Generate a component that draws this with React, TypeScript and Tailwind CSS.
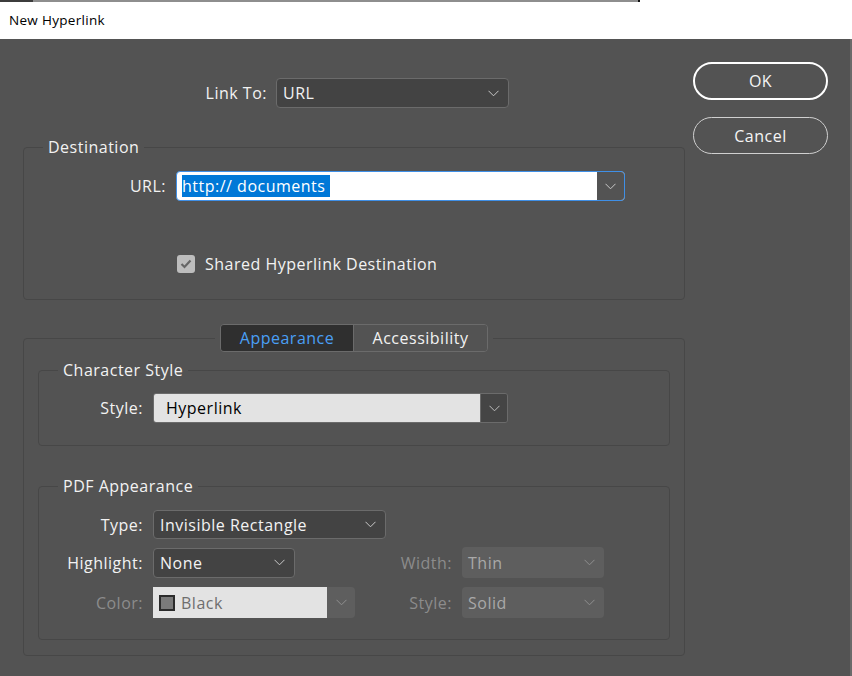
import React from 'react';

const FONT = { fontFamily: '"Open Sans", "Noto Sans", sans-serif', letterSpacing: '0.5px' };

function Chevron({ color = '#c9c9c9' }: { color?: string }) {
  return (
    <svg width="11" height="7" viewBox="0 0 11 7" fill="none">
      <path d="M0.5 0.8 L5.5 5.8 L10.5 0.8" stroke={color} strokeWidth="1" />
    </svg>
  );
}

// dark dropdown used for Link To / Type / Highlight
function DarkSelect({ value, width, height = 30 }: { value: string; width: number; height?: number }) {
  return (
    <div
      className="flex items-center justify-between rounded-[4px] border border-[#6b6b6b] bg-[#434343] pl-[6px] pr-[9px] text-[16px] text-[#f2f2f2]"
      style={{ width, height }}
    >
      <span>{value}</span>
      <Chevron />
    </div>
  );
}

function DisabledSelect({ value, width }: { value: string; width: number }) {
  return (
    <div
      className="flex h-[31px] items-center justify-between rounded-[4px] bg-[#5e5e5e] pl-[6px] pr-[9px] text-[16px] text-[#a9a9a9]"
      style={{ width }}
    >
      <span>{value}</span>
      <Chevron color="#8f8f8f" />
    </div>
  );
}

export default function App() {
  return (
    <div className="relative flex h-[676px] w-[852px] flex-col overflow-hidden bg-[#535353]" style={FONT}>
      {/* Top strip */}
      <div className="flex h-[2px] bg-white">
        <div className="w-[33px] bg-[#3c3c3c]" />
        <div className="w-[605px] bg-[#8e8e8e]" />
        <div className="w-[2px] bg-[#111]" />
      </div>

      {/* Title bar */}
      <div className="flex h-[37px] items-center bg-white pl-[9px] text-[13.5px] tracking-[0.3px] text-black">New Hyperlink</div>

      <div className="flex flex-1">
        {/* Left column */}
        <div className="ml-[23px] flex w-[662px] flex-col">
          {/* Link To */}
          <div className="mt-[39px] flex items-center gap-[9px]">
            <div className="w-[244px] text-right text-[16px] text-[#f2f2f2]">Link To:</div>
            <DarkSelect value="URL" width={233} />
          </div>

          {/* Destination */}
          <fieldset className="mt-[29px] rounded-[4px] border border-[#474747] pb-[25px]">
            <legend className="ml-[19px] px-[5px] text-[16px] leading-[20px] text-[#f2f2f2]">Destination</legend>
            <div className="mt-[14px] flex items-center gap-[10px]">
              <div className="w-[142px] text-right text-[16px] text-[#f2f2f2]">URL:</div>
              <div className="flex h-[30px] w-[449px] overflow-hidden rounded-[4px] border border-[#3f8fe6] bg-white">
                <div className="flex flex-1 items-center pl-[5px]">
                  <span className="bg-[#0078d7] pr-[5px] text-[16px] leading-[22px] text-white">http:// documents</span>
                </div>
                <div className="flex w-[27px] items-center justify-center bg-[#535353]">
                  <Chevron />
                </div>
              </div>
            </div>
            <div className="mt-[53px] flex items-center">
              <div className="ml-[153px] flex h-[18px] w-[18px] items-center justify-center rounded-[3px] bg-[#bdbdbd]">
                <svg width="12" height="10" viewBox="0 0 12 10" fill="none">
                  <path d="M1.5 5 L4.5 8 L10.5 1.5" stroke="#666" strokeWidth="2.2" />
                </svg>
              </div>
              <span className="ml-[10px] text-[16px] leading-[20px] text-[#f2f2f2]">Shared Hyperlink Destination</span>
            </div>
          </fieldset>

          {/* Tab panel */}
          <fieldset className="mt-[24px] rounded-[4px] border border-[#474747] px-[14px] pb-[15px]">
            <legend className="ml-[177px] px-[5px]">
              <div className="flex h-[28px] overflow-hidden rounded-[4px] border border-[#6b6b6b] text-[16px]">
                <div className="flex w-[132px] items-center justify-center bg-[#2f2f2f] text-[#4a9ff5]">Appearance</div>
                <div className="flex w-[134px] items-center justify-center border-l border-[#6b6b6b] bg-[#535353] text-[#f2f2f2]">
                  Accessibility
                </div>
              </div>
            </legend>

            {/* Character Style */}
            <fieldset className="mt-[8px] rounded-[4px] border border-[#474747] pb-[22px]">
              <legend className="ml-[19px] px-[5px] text-[16px] leading-[20px] text-[#f2f2f2]">Character Style</legend>
              <div className="mt-[13px] flex items-center gap-[10px]">
                <div className="w-[104px] text-right text-[16px] text-[#f2f2f2]">Style:</div>
                <div className="flex h-[30px] w-[355px] overflow-hidden rounded-[3px] border border-[#6b6b6b]">
                  <div className="flex flex-1 items-center bg-[#e3e3e3] pl-[12px] text-[16px] text-black">Hyperlink</div>
                  <div className="flex w-[27px] items-center justify-center border-l border-[#6b6b6b] bg-[#454545]">
                    <Chevron color="#bdbdbd" />
                  </div>
                </div>
              </div>
            </fieldset>

            {/* PDF Appearance */}
            <fieldset className="mt-[30px] rounded-[4px] border border-[#474747] pb-[21px]">
              <legend className="ml-[19px] px-[5px] text-[16px] leading-[20px] text-[#f2f2f2]">PDF Appearance</legend>

              <div className="mt-[14px] flex items-center gap-[10px]">
                <div className="w-[104px] text-right text-[16px] text-[#f2f2f2]">Type:</div>
                <DarkSelect value="Invisible Rectangle" width={233} height={29} />
              </div>

              <div className="mt-[8px] flex items-center">
                <div className="w-[104px] text-right text-[16px] text-[#f2f2f2]">Highlight:</div>
                <div className="ml-[10px]">
                  <DarkSelect value="None" width={142} />
                </div>
                <div className="w-[157px] text-right text-[16px] text-[#8c8c8c]">Width:</div>
                <div className="ml-[10px]">
                  <DisabledSelect value="Thin" width={142} />
                </div>
              </div>

              <div className="mt-[9px] flex items-center">
                <div className="w-[104px] text-right text-[16px] text-[#8c8c8c]">Color:</div>
                <div className="ml-[10px] flex h-[31px] w-[202px]">
                  <div className="flex w-[174px] items-center bg-[#e3e3e3] pl-[6px] text-[16px] text-[#6e6e6e]">
                    <span className="mr-[6px] h-[16px] w-[16px] border-2 border-[#2b2b2b] bg-[#7a7a7a]" />
                    Black
                  </div>
                  <div className="flex w-[28px] items-center justify-center rounded-r-[4px] bg-[#5e5e5e]">
                    <Chevron color="#8f8f8f" />
                  </div>
                </div>
                <div className="w-[97px] text-right text-[16px] text-[#8c8c8c]">Style:</div>
                <div className="ml-[10px]">
                  <DisabledSelect value="Solid" width={142} />
                </div>
              </div>
            </fieldset>
          </fieldset>
        </div>

        {/* Buttons */}
        <div className="ml-[8px] flex flex-col">
          <button className="mt-[23px] flex h-[38px] w-[135px] items-center justify-center rounded-full border-2 border-white text-[16px] text-[#f5f5f5]">
            OK
          </button>
          <button className="mt-[17px] flex h-[37px] w-[135px] items-center justify-center rounded-full border border-[#d0d0d0] text-[16px] text-[#f5f5f5]">
            Cancel
          </button>
        </div>

        <div className="ml-auto w-[2px] bg-[#6a6a6a]" />
      </div>
    </div>
  );
}
